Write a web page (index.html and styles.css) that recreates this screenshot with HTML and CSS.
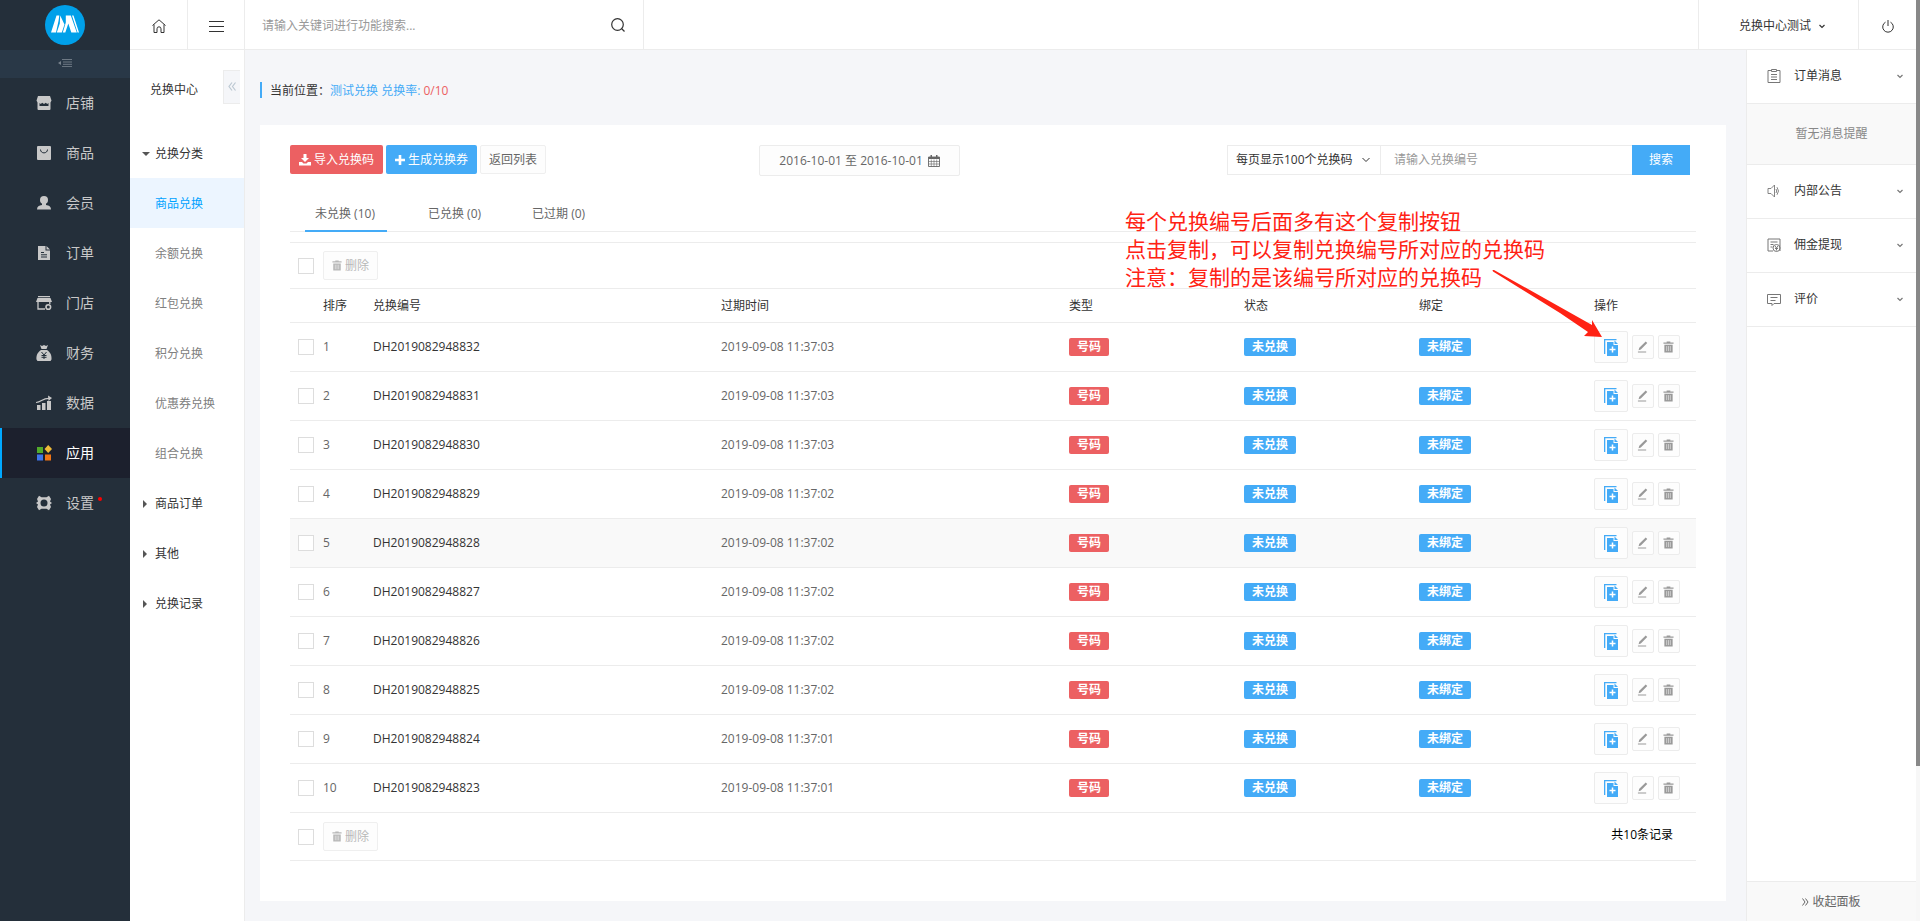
FILE: index.html
```
<!DOCTYPE html>
<html lang="zh-CN">
	<head>
		<meta charset="utf-8">
		<title>兑换中心</title>
		<link rel="stylesheet" href="styles.css">
	</head>
	<body>
		<svg class="sprite" aria-hidden="true">
			<symbol id="i-trash" viewBox="0 0 12 12"><path d="M4 0h4v1h3.500v1.500H.5V1H4zM1.500 3.500h9V12h-9z"/><path d="M4 5v5.500M6 5v5.500M8 5v5.500" stroke="#fff" stroke-width=".7" opacity=".8"/></symbol>
			<symbol id="i-pen" viewBox="0 0 12 12"><path d="M1.700 9.500l.8-2.700L9.500 0l1.700 1.700-7 6.900zM1 10.800h9v1.200H1z"/></symbol>
			<symbol id="i-copy" viewBox="0 0 14 17"><path d="M0 0h12.500v1.300H1.300V15H0z"/><path d="M3 3h6.500v3H14v11H3z"/><path d="M10.500 1.500L14 5h-3.500z"/><path d="M8.500 7.500v6M5.500 10.500h6" stroke="#fff" stroke-width="1.500"/></symbol>
			<symbol id="i-down" viewBox="0 0 8 8"><path d="M1.500 3L4 5.500 6.500 3" fill="none" stroke="currentColor" stroke-width="1.200"/></symbol>
		</svg>
		<div class="app">
			<nav class="sidebar">
				<a class="logo" href="#">
					<svg width="40" height="40" viewBox="0 0 40 40"><circle cx="20" cy="20" r="20" fill="#00a0e9"/><path fill="#fff" d="M6 27.500L11.500 10.500h2.800L13.500 16l-2.500 11.500zM15.200 10.500l4.300 9-2.700 8h-5l3-9zM20.800 10.500h5l6 17h-5.500l-3-9-3 9h-2.500l3-10zM27 10.500h1.500l5.500 17h-1.500z"/></svg>
				</a>
				<button class="fold" aria-label="收起菜单"><svg width="14" height="8" viewBox="0 0 14 8"><path d="M4 .5h10M5 3h9M5 5.300h9M4 7.600h10" stroke="currentColor" stroke-width=".9"/><path d="M0 4l3-2v4z" fill="currentColor"/></svg></button>
				<a class="nav-item" href="#"><svg viewBox="0 0 16 16"><path fill-rule="evenodd" d="M2 1h12l1.500 4.500-1 2V14a1 1 0 0 1-1 1h-11a1 1 0 0 1-1-1V7.500l-1-2zM3.500 8v3h9V8l-1.300 1L9.800 7.800 8 9 6.200 7.800 4.800 9z"/></svg>店铺</a>
				<a class="nav-item" href="#"><svg viewBox="0 0 16 16"><rect x="1" y="1" width="14" height="14" rx="1"/><path d="M4.500 4.500c0 4.500 7 4.500 7 0" fill="none" stroke="#242f3a"/></svg>商品</a>
				<a class="nav-item" href="#"><svg viewBox="0 0 16 16"><circle cx="8" cy="5" r="4"/><path d="M6 8h4v2c3 .5 5 1.500 5 4.500H1C1 11.500 3 10.500 6 10z"/></svg>会员</a>
				<a class="nav-item" href="#"><svg viewBox="0 0 16 16"><path d="M2 1h7.500v4.500H14V15H2zM10.500 1L14 4.500h-3.500z"/><path d="M5 7.500h3M5 9.800h6M5 12h6" stroke="#242f3a"/></svg>订单</a>
				<a class="nav-item" href="#"><svg viewBox="0 0 16 16"><path d="M2 1h12v1.200H2zM1.500 3h13L16 7H0z"/><path d="M2 7v7h7M13.800 7v2" fill="none" stroke="currentColor" stroke-width="1.300"/><circle cx="12.300" cy="12" r="2.300" fill="none" stroke="currentColor" stroke-width="1.600"/></svg>门店</a>
				<a class="nav-item" href="#"><svg viewBox="0 0 16 16"><path d="M4 0l2 1 2-1 2 1 2-1-1.500 4h-5zM5 5h6c3 2 5 5 4.500 9.500L14.500 16h-13L.5 14.500C0 10 2 7 5 5z"/><path d="M5.500 7L8 10l2.500-3M8 10v4M5.500 10.500h5M5.500 12.300h5" fill="none" stroke="#242f3a"/></svg>财务</a>
				<a class="nav-item" href="#"><svg viewBox="0 0 16 16"><path d="M1 10h3.500v5H1zM6 8h3.500v7H6zM11 6h4v9h-4z"/><path d="M0 7.500C6 7 6 3 14 3.500" fill="none" stroke="currentColor" stroke-width="1.200"/><path d="M12 .5L16 3l-3.500 3z"/></svg>数据</a>
				<a class="nav-item active" href="#"><svg viewBox="0 0 16 16"><path fill="#52ab2b" d="M1 2h6v6H1z"/><path fill="#f0bb38" d="M12.200 0L16 4l-3.800 4-3.700-4z"/><path fill="#3e74ea" d="M1 9.500h6v6H1z"/><path fill="#f07415" d="M9 9.500h6v6H9z"/></svg>应用</a>
				<a class="nav-item" href="#"><svg viewBox="0 0 16 16"><path d="M6 1.800V4.500M10 1.800v2.700" stroke="none"/><path fill-rule="evenodd" d="M3 .8l2.500 1.400h5L13 .8l2 3.200-1 2.500L16 8l-2 1.500 1 2.500-2 3.200-2.500-1.400h-5L3 15.200 1 12l1-2.500L0 8l2-1.500L1 4zM8 4.500a3.500 3.500 0 1 0 0 7 3.500 3.500 0 0 0 0-7z"/></svg>设置<i class="dot"></i></a>
			</nav>

			<div class="page">
				<header class="topbar">
					<a class="top-icon" href="#" aria-label="首页"><svg width="14" height="14" viewBox="0 0 14 14"><path d="M.5 6.500L7 .8l6.500 5.700M2 5.500v8h3V9.800a2 2 0 0 1 4 0v3.700h3v-8" fill="none" stroke="currentColor"/></svg></a>
					<button class="top-icon menu" aria-label="菜单"><svg width="15" height="11" viewBox="0 0 15 11"><path d="M0 .5h15M0 5.500h15M0 10.500h15" stroke="currentColor"/></svg></button>
					<form class="top-search">
						<input type="text" aria-label="功能搜索" placeholder="请输入关键词进行功能搜索...">
						<button type="button" aria-label="搜索"><svg width="14" height="14" viewBox="0 0 14 14"><circle cx="6.500" cy="6.500" r="5.800" fill="none" stroke="currentColor" stroke-width="1.200"/><path d="M10.500 10.500l3 3" stroke="currentColor" stroke-width="1.300"/></svg></button>
					</form>
					<button class="account">兑换中心测试 <svg width="8" height="8"><use href="#i-down"/></svg></button>
					<button class="top-icon power" aria-label="退出"><svg width="12" height="13" viewBox="0 0 12 13"><path d="M3.500 2.200a5.300 5.300 0 1 0 5 0M6 0v6" fill="none" stroke="currentColor"/></svg></button>
				</header>

				<div class="columns">
					<aside class="submenu">
						<div class="sub-head">
							<h2>兑换中心</h2>
							<button aria-label="收起"><svg width="8" height="9" viewBox="0 0 8 9"><path d="M4 .5l-3 4 3 4M7.500.5l-3 4 3 4" fill="none" stroke="currentColor" stroke-width="1.200"/></svg></button>
						</div>
						<a class="group open" href="#">兑换分类</a>
						<a class="active" href="#">商品兑换</a>
						<a href="#">余额兑换</a>
						<a href="#">红包兑换</a>
						<a href="#">积分兑换</a>
						<a href="#">优惠券兑换</a>
						<a href="#">组合兑换</a>
						<a class="group" href="#">商品订单</a>
						<a class="group" href="#">其他</a>
						<a class="group" href="#">兑换记录</a>
					</aside>

					<main class="content">
						<div class="crumb">当前位置：<a href="#">测试兑换 兑换率:</a> <em>0/10</em></div>
						<section class="card">
							<div class="toolbar">
								<div class="btns">
									<button class="btn red"><svg width="12" height="12" viewBox="0 0 12 12"><path d="M4.500 0h3v4H10L6 8 2 4h2.500zM0 8h3l1.500 1.500h3L9 8h3v3.500H0z"/></svg> 导入兑换码</button>
									<button class="btn blue"><svg width="10" height="10" viewBox="0 0 10 10"><path d="M3.700 0h2.600v3.700H10v2.600H6.300V10H3.700V6.300H0V3.700h3.700z"/></svg> 生成兑换券</button>
									<button class="btn plain">返回列表</button>
								</div>
								<button class="date">2016-10-01 至 2016-10-01 <svg width="12" height="12" viewBox="0 0 12 12"><path fill="none" stroke="currentColor" stroke-width=".9" d="M.5 2h11v9.500H.5z"/><path fill="none" stroke="currentColor" stroke-width=".6" d="M.5 6.500h11M.5 9h11M3.300 4.500v7M6 4.500v7M8.700 4.500v7"/><path d="M.5 2h11v2H.5zM2.500 0h1.500v3H2.500zM8 0h1.500v3H8z"/></svg></button>
								<form class="filter">
									<div class="select">
										<select aria-label="每页数量"><option>每页显示100个兑换码</option></select>
										<svg width="8" height="8" viewBox="0 0 8 8"><path d="M.5 2L4 5.500 7.500 2" fill="none" stroke="currentColor"/></svg>
									</div>
									<input type="text" aria-label="兑换编号" placeholder="请输入兑换编号">
									<button type="button">搜索</button>
								</form>
							</div>

							<div class="tabs">
								<a class="active" href="#">未兑换 (10)</a>
								<a href="#">已兑换 (0)</a>
								<a href="#">已过期 (0)</a>
							</div>

							<div class="table-wrap">
								<table>
									<colgroup>
										<col class="c-check"><col class="c-sort"><col><col>
										<col class="c-tag"><col class="c-tag"><col class="c-tag"><col class="c-ops">
									</colgroup>
									<thead>
										<tr class="bulk">
											<td><input type="checkbox" aria-label="全选"></td>
											<td colspan="7"><button class="btn del" disabled><svg width="10" height="11"><use href="#i-trash"/></svg> 删除</button></td>
										</tr>
										<tr>
											<th></th><th>排序</th><th>兑换编号</th><th>过期时间</th><th>类型</th><th>状态</th><th>绑定</th><th>操作</th>
										</tr>
									</thead>
									<tbody>
										<tr>
											<td><input type="checkbox" aria-label="选择1"></td><td>1</td><td class="code">DH2019082948832</td><td>2019-09-08 11:37:03</td>
											<td><span class="tag red">号码</span></td><td><span class="tag">未兑换</span></td><td><span class="tag">未绑定</span></td>
											<td><div class="ops"><button class="copy" aria-label="复制"><svg><use href="#i-copy"/></svg></button><button aria-label="编辑"><svg><use href="#i-pen"/></svg></button><button aria-label="删除"><svg><use href="#i-trash"/></svg></button></div></td>
										</tr>
										<tr>
											<td><input type="checkbox" aria-label="选择2"></td><td>2</td><td class="code">DH2019082948831</td><td>2019-09-08 11:37:03</td>
											<td><span class="tag red">号码</span></td><td><span class="tag">未兑换</span></td><td><span class="tag">未绑定</span></td>
											<td><div class="ops"><button class="copy" aria-label="复制"><svg><use href="#i-copy"/></svg></button><button aria-label="编辑"><svg><use href="#i-pen"/></svg></button><button aria-label="删除"><svg><use href="#i-trash"/></svg></button></div></td>
										</tr>
										<tr>
											<td><input type="checkbox" aria-label="选择3"></td><td>3</td><td class="code">DH2019082948830</td><td>2019-09-08 11:37:03</td>
											<td><span class="tag red">号码</span></td><td><span class="tag">未兑换</span></td><td><span class="tag">未绑定</span></td>
											<td><div class="ops"><button class="copy" aria-label="复制"><svg><use href="#i-copy"/></svg></button><button aria-label="编辑"><svg><use href="#i-pen"/></svg></button><button aria-label="删除"><svg><use href="#i-trash"/></svg></button></div></td>
										</tr>
										<tr>
											<td><input type="checkbox" aria-label="选择4"></td><td>4</td><td class="code">DH2019082948829</td><td>2019-09-08 11:37:02</td>
											<td><span class="tag red">号码</span></td><td><span class="tag">未兑换</span></td><td><span class="tag">未绑定</span></td>
											<td><div class="ops"><button class="copy" aria-label="复制"><svg><use href="#i-copy"/></svg></button><button aria-label="编辑"><svg><use href="#i-pen"/></svg></button><button aria-label="删除"><svg><use href="#i-trash"/></svg></button></div></td>
										</tr>
										<tr class="hover">
											<td><input type="checkbox" aria-label="选择5"></td><td>5</td><td class="code">DH2019082948828</td><td>2019-09-08 11:37:02</td>
											<td><span class="tag red">号码</span></td><td><span class="tag">未兑换</span></td><td><span class="tag">未绑定</span></td>
											<td><div class="ops"><button class="copy" aria-label="复制"><svg><use href="#i-copy"/></svg></button><button aria-label="编辑"><svg><use href="#i-pen"/></svg></button><button aria-label="删除"><svg><use href="#i-trash"/></svg></button></div></td>
										</tr>
										<tr>
											<td><input type="checkbox" aria-label="选择6"></td><td>6</td><td class="code">DH2019082948827</td><td>2019-09-08 11:37:02</td>
											<td><span class="tag red">号码</span></td><td><span class="tag">未兑换</span></td><td><span class="tag">未绑定</span></td>
											<td><div class="ops"><button class="copy" aria-label="复制"><svg><use href="#i-copy"/></svg></button><button aria-label="编辑"><svg><use href="#i-pen"/></svg></button><button aria-label="删除"><svg><use href="#i-trash"/></svg></button></div></td>
										</tr>
										<tr>
											<td><input type="checkbox" aria-label="选择7"></td><td>7</td><td class="code">DH2019082948826</td><td>2019-09-08 11:37:02</td>
											<td><span class="tag red">号码</span></td><td><span class="tag">未兑换</span></td><td><span class="tag">未绑定</span></td>
											<td><div class="ops"><button class="copy" aria-label="复制"><svg><use href="#i-copy"/></svg></button><button aria-label="编辑"><svg><use href="#i-pen"/></svg></button><button aria-label="删除"><svg><use href="#i-trash"/></svg></button></div></td>
										</tr>
										<tr>
											<td><input type="checkbox" aria-label="选择8"></td><td>8</td><td class="code">DH2019082948825</td><td>2019-09-08 11:37:02</td>
											<td><span class="tag red">号码</span></td><td><span class="tag">未兑换</span></td><td><span class="tag">未绑定</span></td>
											<td><div class="ops"><button class="copy" aria-label="复制"><svg><use href="#i-copy"/></svg></button><button aria-label="编辑"><svg><use href="#i-pen"/></svg></button><button aria-label="删除"><svg><use href="#i-trash"/></svg></button></div></td>
										</tr>
										<tr>
											<td><input type="checkbox" aria-label="选择9"></td><td>9</td><td class="code">DH2019082948824</td><td>2019-09-08 11:37:01</td>
											<td><span class="tag red">号码</span></td><td><span class="tag">未兑换</span></td><td><span class="tag">未绑定</span></td>
											<td><div class="ops"><button class="copy" aria-label="复制"><svg><use href="#i-copy"/></svg></button><button aria-label="编辑"><svg><use href="#i-pen"/></svg></button><button aria-label="删除"><svg><use href="#i-trash"/></svg></button></div></td>
										</tr>
										<tr>
											<td><input type="checkbox" aria-label="选择10"></td><td>10</td><td class="code">DH2019082948823</td><td>2019-09-08 11:37:01</td>
											<td><span class="tag red">号码</span></td><td><span class="tag">未兑换</span></td><td><span class="tag">未绑定</span></td>
											<td><div class="ops"><button class="copy" aria-label="复制"><svg><use href="#i-copy"/></svg></button><button aria-label="编辑"><svg><use href="#i-pen"/></svg></button><button aria-label="删除"><svg><use href="#i-trash"/></svg></button></div></td>
										</tr>
									</tbody>
									<tfoot>
										<tr class="bulk">
											<td><input type="checkbox" aria-label="全选"></td>
											<td colspan="3"><button class="btn del" disabled><svg width="10" height="11"><use href="#i-trash"/></svg> 删除</button></td>
											<td colspan="4" class="total">共10条记录</td>
										</tr>
									</tfoot>
								</table>

								<!-- note pinned over the table, points at the copy button -->
								<div class="note">
									<p>每个兑换编号后面多有这个复制按钮<br>点击复制，可以复制兑换编号所对应的兑换码<br>注意：复制的是该编号所对应的兑换码</p>
									<svg width="110" height="68" viewBox="0 0 110 68"><path fill="#ff2214" d="M.5 0L2 0 68 37l32 18V50l10 17-18-1 4-4-28-19L1 1.500z"/></svg>
								</div>
							</div>
						</section>
					</main>

					<aside class="panel">
						<a class="panel-item" href="#"><svg width="14" height="14" viewBox="0 0 14 14"><path d="M4 1.500H1v12h12v-12h-3M4.500.5h5v2h-5zM4 5.500h6M4 8h6M4 10.500h6" fill="none" stroke="currentColor"/></svg><span>订单消息</span><svg width="8" height="8"><use href="#i-down"/></svg></a>
						<div class="empty">暂无消息提醒</div>
						<a class="panel-item" href="#"><svg width="14" height="14" viewBox="0 0 14 14"><path d="M1 4.500h3L7.500 1v12L4 9.500H1zM9 5q1.500 2 0 4M10 3.200q3 3.800 0 7.600" fill="none" stroke="currentColor" stroke-width=".9"/></svg><span>内部公告</span><svg width="8" height="8"><use href="#i-down"/></svg></a>
						<a class="panel-item" href="#"><svg width="14" height="14" viewBox="0 0 14 14"><path d="M6 13H1V1h12v12M3.500 4h7M3.500 6.500h3M3.500 9h2M8 8l1.500 2L11 8M9.500 10v2.500M8 10.500h3" fill="none" stroke="currentColor"/><circle cx="9.500" cy="10" r="3.500" fill="none" stroke="currentColor"/></svg><span>佣金提现</span><svg width="8" height="8"><use href="#i-down"/></svg></a>
						<a class="panel-item" href="#"><svg width="14" height="14" viewBox="0 0 14 14"><path d="M.5 2.500h13v9H7l-2 2v-2H.5zM3.500 5.500h7M3.500 8.500h5" fill="none" stroke="currentColor"/></svg><span>评价</span><svg width="8" height="8"><use href="#i-down"/></svg></a>
						<button class="panel-fold"><svg width="7" height="8" viewBox="0 0 7 8"><path d="M.5.5l2.500 3.500L.5 7.500M3.500.5L6 4 3.500 7.500" fill="none" stroke="currentColor"/></svg> 收起面板</button>
					</aside>
				</div>
			</div>
			<div class="scroll"><div class="thumb"></div></div>
		</div>
	</body>
</html>
```
FILE: styles.css
```
* {
	box-sizing: border-box;
}
body {
	margin: 0;
	font: 12px/20px "Open Sans", "Noto Sans CJK SC", sans-serif;
	color: #666;
	background: #f5f6f9;
}
a {
	color: inherit;
	text-decoration: none;
}
button,
input,
select {
	font: inherit;
	color: inherit;
	margin: 0;
	padding: 0;
	border: none;
	border-radius: 0;
	background: none;
	outline: none;
}
input::placeholder {
	color: #999;
	opacity: 1;
}
svg {
	fill: currentColor;
	flex: none;
}
.sprite {
	display: none;
}
.app {
	display: flex;
	min-height: 100vh;
}

/* left navigation */
.sidebar {
	width: 130px;
	flex: none;
	background: #242f3a;
	color: #c8c8c8;
}
.logo {
	display: flex;
	justify-content: center;
	height: 50px;
	padding-top: 5px;
}
.fold {
	display: flex;
	align-items: center;
	justify-content: center;
	width: 100%;
	height: 28px;
	padding-bottom: 2px;
	background: #293847;
	color: #76818b;
}
.nav-item {
	display: flex;
	align-items: center;
	gap: 14px;
	height: 50px;
	padding: 0 0 1px 34px;
	border-left: 2px solid transparent;
	font-size: 14px;
}
.nav-item svg {
	width: 16px;
	height: 16px;
}
.nav-item.active {
	background: #1c202d;
	border-color: #00a8ff;
	color: #fff;
}
.dot {
	width: 4px;
	height: 4px;
	margin: 0 0 8px -10px;
	border-radius: 50%;
	background: #f00;
}

/* top bar */
.page {
	flex: 1;
	min-width: 0;
	display: flex;
	flex-direction: column;
}
.topbar {
	display: flex;
	height: 50px;
	background: #fff;
	border-bottom: 1px solid #ececec;
	color: #333;
}
.top-icon {
	display: flex;
	align-items: center;
	justify-content: center;
	width: 58px;
	padding-top: 3px;
	border-right: 1px solid #ececec;
}
.menu {
	width: 57px;
}
.power {
	width: 57px;
	border: none;
}
.top-search {
	display: flex;
	width: 399px;
	border-right: 1px solid #ececec;
}
.top-search input {
	flex: 1;
	padding: 2px 0 0 17px;
}
.top-search button {
	width: 50px;
	padding-top: 6px;
}
.account {
	width: 161px;
	margin-left: auto;
	padding: 2px 0 0 8px;
	border: solid #ececec;
	border-width: 0 1px;
}
.account svg {
	margin-left: 4px;
}
.columns {
	flex: 1;
	display: flex;
}

/* second level menu */
.submenu {
	width: 115px;
	flex: none;
	background: #fff;
	border-right: 1px solid #ececec;
	color: #808080;
}
.submenu > a {
	display: block;
	height: 50px;
	padding: 1px 0 0 25px;
	line-height: 50px;
}
.submenu > a.active {
	background: #ecf5ff;
	color: #00a2ff;
}
.submenu > .group {
	display: flex;
	align-items: center;
	gap: 8px;
	padding-left: 13px;
	color: #333;
}
.group::before {
	content: "";
	border: 4px solid transparent;
	border-left-color: #555;
	border-right: 0;
}
.submenu > .open {
	gap: 5px;
	padding-left: 12px;
}
.open::before {
	border: 4px solid transparent;
	border-top-color: #555;
	border-bottom: 0;
}
.sub-head {
	display: flex;
	justify-content: space-between;
	height: 78px;
	padding: 20px 4px 0 20px;
}
.sub-head h2 {
	margin: 0;
	font-size: 12px;
	font-weight: normal;
	line-height: 40px;
	color: #333;
}
.sub-head button {
	width: 17px;
	height: 34px;
	border: 1px solid #ececec;
	border-right: none;
	background: #f5f6f9;
	color: #bcc8d2;
}

/* main */
.content {
	flex: 1;
	min-width: 0;
	padding: 32px 20px 20px 15px;
}
.crumb {
	height: 16px;
	line-height: 18px;
	padding-left: 8px;
	border-left: 2px solid #44abf7;
	color: #333;
}
.crumb a {
	color: #44abf7;
}
.crumb em {
	font-style: normal;
	color: #ec6062;
}
.card {
	margin-top: 27px;
	padding: 20px 30px 40px;
	background: #fff;
}
.toolbar {
	display: flex;
	align-items: flex-start;
	padding-right: 6px;
}
.btns {
	display: flex;
	gap: 3px;
}
.btn {
	display: inline-flex;
	align-items: center;
	gap: 3px;
	height: 29px;
	padding: 0 9px;
	border-radius: 2px;
	color: #fff;
}
.btn.red {
	background: #ec6062;
}
.btn.blue {
	background: #44abf7;
}
.btn.plain,
.btn.del {
	border: 1px solid #efefef;
	background: #fdfdfd;
	color: #666;
	padding: 0 8px;
}
.btn.del {
	color: #b8b8b8;
}
.date {
	display: flex;
	align-items: center;
	justify-content: center;
	gap: 5px;
	min-width: 201px;
	height: 31px;
	margin: 0 auto 0 213px;
	border: 1px solid #ececec;
	border-radius: 2px;
	background: #fdfdfd;
}
.filter {
	display: flex;
	height: 30px;
}
.select {
	display: flex;
	align-items: center;
	width: 154px;
	padding: 0 10px 0 8px;
	border: 1px solid #ececec;
	color: #333;
}
.select select {
	flex: 1;
	appearance: none;
}
.filter input {
	width: 251px;
	padding-left: 13px;
	border: solid #ececec;
	border-width: 1px 0;
}
.filter button {
	width: 58px;
	background: #44abf7;
	color: #fff;
}
.tabs {
	display: flex;
	gap: 31px;
	height: 56px;
	padding: 20px 15px 0;
	border-bottom: 1px solid #ececec;
}
.tabs a {
	height: 36px;
	padding: 8px 10px 0;
}
.tabs .active {
	min-width: 82px;
	border-bottom: 2px solid #44abf7;
}

/* list */
.table-wrap {
	position: relative;
	margin-top: 10px;
}
table {
	width: 100%;
	table-layout: fixed;
	border-collapse: collapse;
	border-top: 1px solid #ececec;
}
.c-check {
	width: 25px;
}
.c-sort {
	width: 50px;
}
.c-tag {
	width: 175px;
}
.c-ops {
	width: 110px;
}
th,
td {
	height: 49px;
	padding: 0 8px;
	border-bottom: 1px solid #ececec;
	text-align: left;
}
th {
	height: 34px;
	font-weight: normal;
	color: #333;
}
.bulk td {
	height: 46px;
}
tfoot .bulk td {
	height: 48px;
}
.code {
	color: #333;
}
.hover {
	background: #f9f9f9;
}
td:first-child {
	padding-right: 0;
}
input[type="checkbox"] {
	display: block;
	width: 16px;
	height: 16px;
	border: 1px solid #ddd;
	background: #fff;
	appearance: none;
}
.bulk .btn {
	display: flex;
}
.tag {
	display: inline-block;
	padding: 0 8px;
	border-radius: 2px;
	background: #44abf7;
	color: #fff;
	font-weight: bold;
	line-height: 18px;
}
.tag.red {
	background: #ec6062;
}
.ops {
	display: flex;
	align-items: center;
	gap: 4px;
}
.ops button {
	display: flex;
	align-items: center;
	justify-content: center;
	width: 22px;
	height: 24px;
	border: 1px solid #ececec;
	border-radius: 2px;
	background: #fdfdfd;
	color: #999;
}
.ops svg {
	width: 11px;
	height: 12px;
}
.ops .copy {
	width: 34px;
	height: 32px;
	color: #44abf7;
}
.ops .copy svg {
	width: 14px;
	height: 17px;
}
.bulk .total {
	padding: 0 23px 4px 0;
	text-align: right;
	color: #000;
}
.note {
	position: absolute;
	top: -35px;
	right: 94px;
	width: 477px;
	color: #ff2214;
	pointer-events: none;
}
.note p {
	margin: 0;
	font-size: 21px;
	line-height: 28px;
	white-space: nowrap;
}
.note svg {
	position: absolute;
	right: 0;
	top: 63px;
}

/* right panel */
.panel {
	width: 170px;
	flex: none;
	display: flex;
	flex-direction: column;
	background: #fff;
	border-left: 1px solid #ececec;
	color: #333;
}
.panel-item {
	display: flex;
	align-items: center;
	gap: 13px;
	height: 54px;
	padding: 0 12px 2px 20px;
	border-bottom: 1px solid #ececec;
}
.panel-item svg {
	color: #777;
}
.panel-item span {
	flex: 1;
}
.empty {
	height: 61px;
	border-bottom: 1px solid #ececec;
	background: #f9f9f9;
	color: #888;
	line-height: 60px;
	text-align: center;
}
.panel-fold {
	height: 40px;
	margin-top: auto;
	border-top: 1px solid #ececec;
	background: #f9f9f9;
	color: #666;
}
.scroll {
	width: 4px;
	flex: none;
	background: #f7f7f7;
}
.thumb {
	height: 766px;
	background: #888;
}
```
